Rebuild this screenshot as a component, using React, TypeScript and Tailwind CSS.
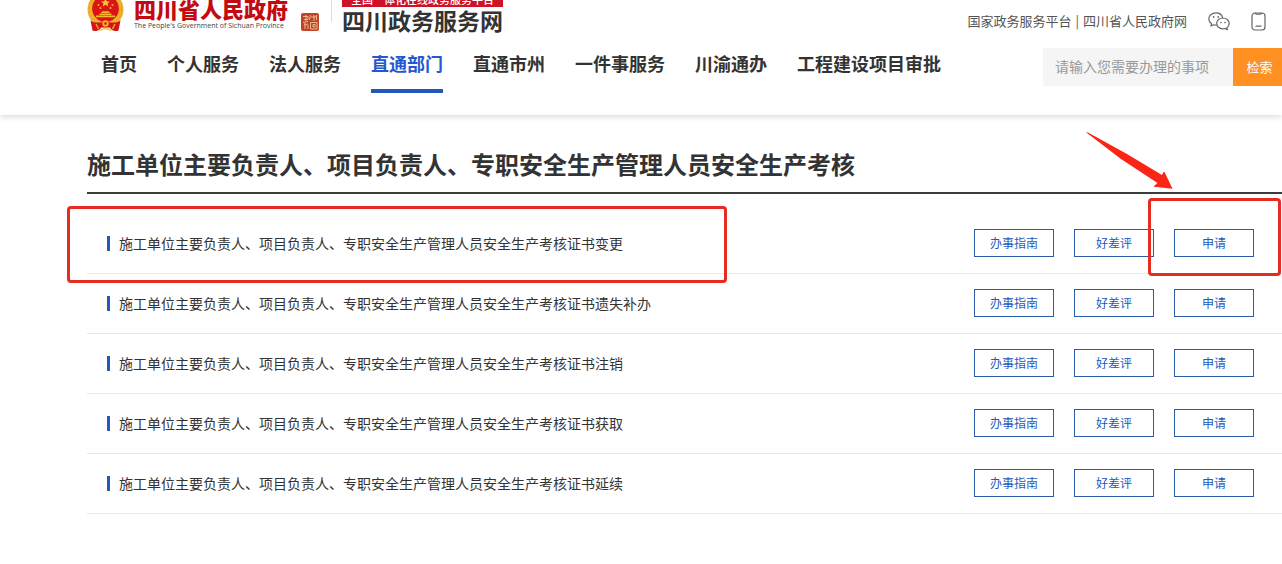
const navItems = [
  { label: "首页" },
  { label: "个人服务" },
  { label: "法人服务" },
  { label: "直通部门", active: true },
  { label: "直通市州" },
  { label: "一件事服务" },
  { label: "川渝通办" },
  { label: "工程建设项目审批" },
]

const services = [
  "施工单位主要负责人、项目负责人、专职安全生产管理人员安全生产考核证书变更",
  "施工单位主要负责人、项目负责人、专职安全生产管理人员安全生产考核证书遗失补办",
  "施工单位主要负责人、项目负责人、专职安全生产管理人员安全生产考核证书注销",
  "施工单位主要负责人、项目负责人、专职安全生产管理人员安全生产考核证书获取",
  "施工单位主要负责人、项目负责人、专职安全生产管理人员安全生产考核证书延续",
]

const actions = ["办事指南", "好差评", "申请"]

function Emblem() {
  return (
    <svg width="38" height="32" viewBox="0 0 38 32" className="shrink-0" aria-hidden="true">
      <circle cx="18.5" cy="9.5" r="18" fill="#efb22c" />
      <circle cx="18.5" cy="9.5" r="16.4" fill="none" stroke="#e39a26" strokeWidth="1" strokeDasharray="2 2" />
      <circle cx="18.5" cy="8.5" r="13.4" fill="#dc1416" />
      <path d="M18.5 -1.500l1.300 3h3.200l-2.500 2 .9 3-2.900-1.800-2.900 1.800.9-3-2.500-2h3.200z" fill="#f7c93a" />
      <g fill="#f3b62f">
        <circle cx="11.500" cy="5" r="1" />
        <circle cx="13.500" cy="8" r="1" />
        <circle cx="23.500" cy="8" r="1" />
        <circle cx="25.500" cy="5" r="1" />
        <path d="M14 13l1.500-1.800h6l1.500 1.800zM12.500 13.500h12v1.400h-12zM9 15.400h19v1.800H9z" />
      </g>
      <path d="M3.500 20.500c5 3.500 9 1.500 15 1.500s10 2 15-1.500l-2 10c-3 1-5 .5-7-1l-2-2h-8l-2 2c-2 1.500-4 2-7 1z" fill="#d31418" />
      <circle cx="18.500" cy="23.500" r="3.200" fill="#efb22c" />
      <circle cx="18.500" cy="23.500" r="1.300" fill="#d31418" />
      <path d="M9 24l2.500 5M28 24l-2.500 5M13 30.500c3-2.500 8-2.500 11 0" fill="none" stroke="#f0b52e" strokeWidth="1.300" />
    </svg>
  )
}

function Seal() {
  return (
    <svg width="18" height="18" viewBox="0 0 18 18" className="shrink-0" aria-hidden="true">
      <rect width="18" height="18" rx="2" fill="#c2412b" />
      <g fill="none" stroke="#e8b98c" strokeWidth="1">
        <path d="M2 3.500h5v3H3M5 2v6M2 9.500l5-1M3 12l4-1M4 10v6M7 12v4" />
        <path d="M9.500 2l-1 5M10 4h6M13 2v6M15.500 2v5M9.500 9.500h6.500v6.500H9.500zM12 11.500h2v2.500h-2z" />
      </g>
    </svg>
  )
}

function WechatIcon() {
  return (
    <svg width="22" height="19" viewBox="0 0 22 19" fill="none" stroke="#666" strokeWidth="1.2" strokeLinecap="round" strokeLinejoin="round" aria-hidden="true">
      <path d="M14.600 5.800C14 2.900 11.300.8 7.900.8 4 .8.800 3.500.800 6.900c0 2 1.100 3.700 2.800 4.800L2.900 14l2.600-1.300c.9.300 1.800.4 2.900.3" />
      <path d="M14.900 6c-3.500 0-6.200 2.400-6.200 5.400s2.700 5.400 6.200 5.400c.8 0 1.500-.1 2.200-.3l2.200 1.300-.5-2.100c1.500-1 2.400-2.500 2.400-4.300 0-3-2.800-5.400-6.300-5.400z" />
      <g fill="#666" stroke="none">
        <circle cx="5.600" cy="4.900" r=".9" />
        <circle cx="10.200" cy="4.900" r=".9" />
        <circle cx="12.900" cy="10.600" r=".8" />
        <circle cx="16.900" cy="10.600" r=".8" />
      </g>
    </svg>
  )
}

function PhoneIcon() {
  return (
    <svg width="15" height="19" viewBox="0 0 15 19" fill="none" stroke="#666" strokeWidth="1.2" strokeLinecap="round" aria-hidden="true">
      <rect x="1" y="1" width="13" height="17" rx="3" />
      <path d="M4.500 1.200c.3.800.7 1 1.200 1h3.600c.5 0 .9-.2 1.200-1M5 14.200h5" />
    </svg>
  )
}

function Header() {
  return (
    <header className="relative bg-white pb-[22px] shadow-[0_2px_6px_rgba(0,0,0,0.14)]">
      <div className="flex h-10 items-start pl-[87px]">
        <Emblem />
        <a href="#gov" className="ml-[9px] shrink-0 whitespace-nowrap">
          <span className="block text-[22px] leading-4 font-black text-[#c40a10]">四川省人民政府</span>
          <span className="mt-[5px] block font-['Open_Sans','Noto_Sans',sans-serif] text-[7px] leading-[10px] text-[#444]">
            The People's Government of Sichuan Province
          </span>
        </a>
        <div className="ml-[13px] pt-[13px]">
          <Seal />
        </div>
        <div className="ml-3 h-[22px] w-px bg-[#ddd]" />
        <a href="#home" className="ml-[10px] w-[161px] shrink-0 whitespace-nowrap">
          <span className="-mt-2 block h-[15px] bg-[#cf1226] text-center text-[11px] leading-[15px] font-medium text-white">
            全国一体化在线政务服务平台
          </span>
          <span className="mt-px block text-[23px] leading-6 font-bold text-[#333]">四川政务服务网</span>
        </a>
        <div className="ml-auto flex h-[42px] shrink-0 items-center pr-4 text-[13px] text-[#555]">
          <a href="#national">国家政务服务平台</a>
          <span className="px-1">|</span>
          <a href="#province">四川省人民政府网</a>
          <a href="#wechat" aria-label="微信" className="ml-[21px]">
            <WechatIcon />
          </a>
          <a href="#mobile" aria-label="手机" className="ml-[21px]">
            <PhoneIcon />
          </a>
        </div>
      </div>
      <div className="flex items-start pt-2 pl-[101px]">
        <nav className="flex shrink-0 gap-[30px] text-lg leading-[30px] font-bold whitespace-nowrap text-[#333]">
          {navItems.map((item) => (
            <a
              key={item.label}
              href="#nav"
              className={
                item.active
                  ? "border-b-4 border-[#2458c0] pb-[11px] text-[#2458d0]"
                  : "border-b-4 border-transparent pb-[11px]"
              }
            >
              {item.label}
            </a>
          ))}
        </nav>
        <form className="ml-auto flex h-[38px] shrink-0">
          <input
            type="text"
            aria-label="搜索事项"
            placeholder="请输入您需要办理的事项"
            className="w-[190px] bg-[#f5f5f5] px-3 pb-0.5 text-sm text-[#333] outline-none placeholder:text-[#999]"
          />
          <button type="button" className="w-[49px] bg-[#ff9022] pl-1 text-[13px] text-white">
            检索
          </button>
        </form>
      </div>
    </header>
  )
}

// Red callout arrow pointing at the apply button
function Arrow() {
  return (
    <svg
      width="88"
      height="58"
      viewBox="0 0 88 58"
      className="absolute -top-[62px] right-[109px]"
      aria-hidden="true"
    >
      <path d="M1 .3L3 .4L42 22L77 43L78.500 40L79.500 40L87.500 56.700L69 54.800V54L72.500 51L36 27Z" fill="#fb2416" />
    </svg>
  )
}

export default function App() {
  return (
    <div className="min-h-screen overflow-hidden bg-white font-['Noto_Sans_CJK_SC',sans-serif] text-[#333]">
      <Header />
      <main className="pl-[87px]">
        <h1 className="border-b-2 border-[#3c3c3c] pt-[33px] pb-3 text-2xl leading-8 font-bold whitespace-nowrap">
          施工单位主要负责人、项目负责人、专职安全生产管理人员安全生产考核
        </h1>
        <ul className="relative pt-5">
          {services.map((service) => (
            <li key={service} className="flex h-[60px] items-center border-b border-[#e8e8e8] pr-7 pb-px pl-5">
              <span className="h-[15px] w-[3px] shrink-0 bg-[#2458c0]" />
              <a href="#service" className="ml-[9px] pb-px text-sm whitespace-nowrap">
                {service}
              </a>
              <div className="ml-auto flex shrink-0 gap-5">
                {actions.map((action) => (
                  <button
                    key={action}
                    type="button"
                    className="h-7 w-20 border border-[#2a5caa] bg-white text-xs text-[#2458c0]"
                  >
                    {action}
                  </button>
                ))}
              </div>
            </li>
          ))}
          <li aria-hidden="true" className="pointer-events-none">
            <Arrow />
            <span className="absolute top-3 -left-5 h-[77px] w-[660px] rounded border-3 border-[#e42c20]" />
            <span className="absolute top-1 right-px h-[78px] w-[133px] rounded border-3 border-[#e42c20]" />
          </li>
        </ul>
      </main>
    </div>
  )
}
